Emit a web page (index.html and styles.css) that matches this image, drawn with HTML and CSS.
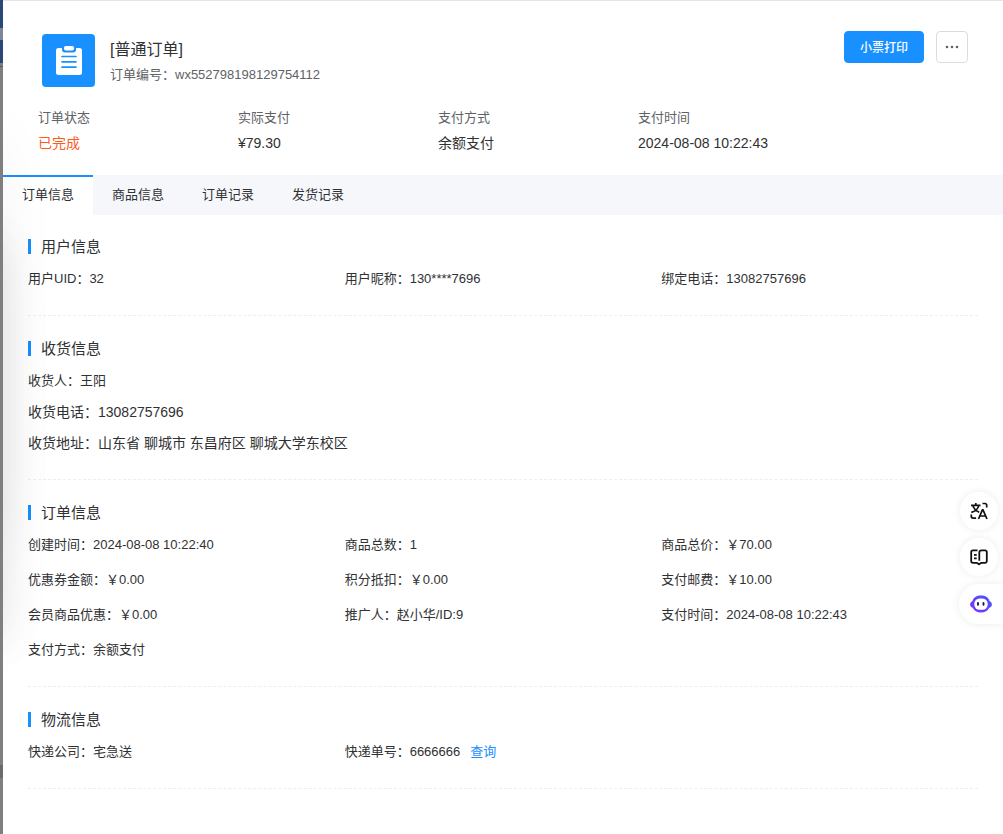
FILE: index.html
```html
<!DOCTYPE html>
<html lang="zh-CN">
<head>
<meta charset="utf-8">
<meta name="viewport" content="width=device-width, initial-scale=1">
<title>订单详情</title>
<link rel="stylesheet" href="styles.css">
</head>
<body>
<main class="drawer">
  <header class="head">
    <div class="head-top">
      <svg class="order-icon" viewBox="0 0 53 53" aria-hidden="true">
        <rect width="53" height="53" rx="4" fill="#1890ff"/>
        <path fill="#fff" d="M16.500 14h3.500v1.500a3 3 0 0 0 3 3h8a3 3 0 0 0 3-3V14h3.500a2.500 2.500 0 0 1 2.500 2.500v22a2.500 2.500 0 0 1-2.500 2.500h-21a2.500 2.500 0 0 1-2.500-2.500v-22a2.500 2.500 0 0 1 2.500-2.500z"/>
        <rect x="22" y="12" width="10" height="4.500" rx="1.800" fill="#fff"/>
        <path stroke="#1890ff" stroke-width="1.700" stroke-linecap="round" d="M20 22.500h14M20 27.800h14M20 33.100h14"/>
      </svg>
      <div class="head-text">
        <h1 class="order-title">[普通订单]</h1>
        <div class="order-no">订单编号：wx552798198129754112</div>
      </div>
      <div class="actions">
        <button class="btn btn-primary" type="button">小票打印</button>
        <button class="btn btn-more" type="button" aria-label="更多">
          <svg viewBox="0 0 14 14" width="14" height="14" aria-hidden="true" fill="#606266"><circle cx="2" cy="7" r="1.300"/><circle cx="7" cy="7" r="1.300"/><circle cx="12" cy="7" r="1.300"/></svg>
        </button>
      </div>
    </div>
    <dl class="summary">
      <div><dt>订单状态</dt><dd class="status">已完成</dd></div>
      <div><dt>实际支付</dt><dd>¥79.30</dd></div>
      <div><dt>支付方式</dt><dd>余额支付</dd></div>
      <div><dt>支付时间</dt><dd>2024-08-08 10:22:43</dd></div>
    </dl>
  </header>
  <nav class="tabs">
    <button class="tab active" type="button">订单信息</button>
    <button class="tab" type="button">商品信息</button>
    <button class="tab" type="button">订单记录</button>
    <button class="tab" type="button">发货记录</button>
  </nav>
  <div class="content">
    <section class="section">
      <h2 class="section-title">用户信息</h2>
      <div class="grid">
        <div>用户UID：32</div><div>用户昵称：130****7696</div><div>绑定电话：13082757696</div>
      </div>
    </section>
    <section class="section">
      <h2 class="section-title">收货信息</h2>
      <div class="lines">
        <div>收货人：王阳</div>
        <div class="large">收货电话：13082757696</div>
        <div class="large">收货地址：山东省 聊城市 东昌府区 聊城大学东校区</div>
      </div>
    </section>
    <section class="section">
      <h2 class="section-title">订单信息</h2>
      <div class="grid">
        <div>创建时间：2024-08-08 10:22:40</div><div>商品总数：1</div><div>商品总价：￥70.00</div>
        <div>优惠券金额：￥0.00</div><div>积分抵扣：￥0.00</div><div>支付邮费：￥10.00</div>
        <div>会员商品优惠：￥0.00</div><div>推广人：赵小华/ID:9</div><div>支付时间：2024-08-08 10:22:43</div>
        <div>支付方式：余额支付</div>
      </div>
    </section>
    <section class="section">
      <h2 class="section-title">物流信息</h2>
      <div class="grid">
        <div>快递公司：宅急送</div><div>快递单号：6666666<a class="query" href="#">查询</a></div>
      </div>
    </section>
  </div>
</main>
<div class="edge-shadow"></div>
<aside class="float-tools">
  <button class="float-btn" type="button" aria-label="翻译">
    <svg viewBox="0 0 18 18" width="18" height="18" fill="none" stroke="#111" stroke-width="1.700" aria-hidden="true">
      <path d="M1 3.300h9.500M5.800 1v2.300M8.800 3.600C8 6.800 5.500 9.200 1.300 10.400M3 4c1 2.800 3.200 5 6.200 6.200M8.500 17l3.900-9.200h.6L17 17M10 14h5.500M12.500 1.500h2.400a1.800 1.800 0 0 1 1.800 1.800V5.500M1.300 12.500v1.800a1.800 1.800 0 0 0 1.800 1.800h3"/>
    </svg>
  </button>
  <button class="float-btn" type="button" aria-label="阅读">
    <svg viewBox="0 0 18 18" width="18" height="18" fill="none" stroke="#111" stroke-width="1.800" aria-hidden="true">
      <path stroke-linejoin="round" d="M7.500 2.300H3A1.800 1.800 0 0 0 1.200 4.100v9A1.800 1.800 0 0 0 3 14.900h4l2 1.400 2-1.400h4a1.800 1.800 0 0 0 1.800-1.800v-9A1.800 1.800 0 0 0 15 2.300h-3.300C10 2.300 9.300 3 9.300 4.600v8.200M4 6.800h2.700M4 10.400h2.700"/>
    </svg>
  </button>
  <button class="float-btn float-bot" type="button" aria-label="助手">
    <svg viewBox="0 0 22 18" width="22" height="18" aria-hidden="true">
      <defs><linearGradient id="bot" x1="0" y1="1" x2="1" y2="0"><stop offset="0" stop-color="#8a2df5"/><stop offset="1" stop-color="#3a5cff"/></linearGradient></defs>
      <path fill="url(#bot)" d="M11 .5c4.500 0 7.600 2 8.700 5.700 1.300.7 2.200 1.800 2.200 3.300s-.9 2.800-2.500 3.300C17.800 16 15 17.500 11 17.500S4.200 16 2.600 12.800C1 12.300.1 11 .1 9.500s.9-2.600 2.200-3.300C3.400 2.500 6.500.5 11 .5z"/>
      <rect x="4.300" y="3.500" width="13.400" height="11.300" rx="5.200" fill="#fff"/>
      <path stroke="#1d1446" stroke-width="1.900" stroke-linecap="round" d="M8 8v1.700M13.500 8v1.700"/>
    </svg>
  </button>
</aside>
</body>
</html>
```
FILE: styles.css
```css
* { box-sizing: border-box; }

body {
  margin: 0;
  min-height: 100vh;
  padding-left: 3px;
  position: relative;
  overflow-x: hidden;
  background: linear-gradient(#2b4777 0 28px, #7f8794 28px 40px, #2b4777 40px 63px, #7f7f7f 63px 66px, #5c5c5c 66px 67px, #7f7f7f 67px 765px, #6b6b6b 765px 778px, #7f7f7f 778px);
  font-family: "Liberation Sans", "Noto Sans CJK SC", sans-serif;
  font-size: 13px;
  color: #303133;
}

button {
  font: inherit;
  cursor: pointer;
}

h1, h2, dl, dd {
  margin: 0;
  font-weight: 400;
}

.drawer {
  min-height: 100vh;
  background: #fff;
  border-top: 1px solid #e4e4e4;
}

.head { padding: 30px 35px 20px; }

.head-top {
  display: flex;
  align-items: flex-start;
}

.order-icon {
  width: 53px;
  height: 53px;
  margin: 3px 15px 0 4px;
}

.head-text {
  flex: 1;
  padding-top: 6px;
}

.order-title {
  font-size: 16px;
  line-height: 26px;
}

.order-no {
  line-height: 24px;
  color: #606266;
}

.actions {
  display: flex;
  gap: 12px;
}

.btn {
  height: 32px;
  border-radius: 4px;
  border: 1px solid #dcdfe6;
  background: #fff;
  font-size: 12px;
}

.btn-primary {
  width: 80px;
  padding: 0 0 2px;
  border-color: #1890ff;
  background: #1890ff;
  color: #fff;
  font-weight: 500;
}

.btn-more {
  display: flex;
  align-items: center;
  justify-content: center;
  width: 32px;
  padding: 0;
  border-color: #dcdcdc;
}

.summary {
  display: grid;
  grid-template-columns: repeat(4, 200px);
  margin-top: 18px;
}

.summary dt {
  line-height: 26px;
  color: #606266;
}

.summary dd {
  font-size: 14px;
  line-height: 24px;
}

.summary .status { color: #ff5a1f; }

.tabs {
  display: flex;
  background: #f5f7fb;
}

.tab {
  width: 90px;
  height: 40px;
  padding: 0 0 6px;
  border: 0;
  border-top: 2px solid transparent;
  background: none;
  color: #303133;
}

.tab.active {
  border-top-color: #1890ff;
  background: #fff;
}

.content { padding: 0 25px; }

.section {
  padding: 25px 0 26px;
  border-bottom: 1px dashed #eee;
}

.section:first-child { padding-top: 24px; }

.section-title {
  padding-left: 10px;
  border-left: 3px solid #1890ff;
  font-size: 15px;
  line-height: 15px;
}

.grid {
  display: grid;
  grid-template-columns: repeat(3, 1fr);
  row-gap: 15px;
  margin-top: 15px;
  line-height: 20px;
}

.lines {
  display: grid;
  row-gap: 11px;
  margin-top: 15px;
  line-height: 20px;
}

.large { font-size: 14px; }

.query {
  margin-left: 10px;
  color: #1890ff;
  text-decoration: none;
}

.edge-shadow {
  position: absolute;
  left: 3px;
  top: 1px;
  width: 60px;
  height: 760px;
  overflow: hidden;
  pointer-events: none;
}

.edge-shadow::before {
  content: "";
  position: absolute;
  left: -200px;
  top: 240px;
  width: 197px;
  height: 400px;
  box-shadow: 0 0 40px rgba(0, 0, 0, .09), 0 -100px 60px rgba(0, 0, 0, .05), 0 0 60px rgba(0, 0, 0, .05);
}

.float-tools {
  position: fixed;
  right: 0;
  top: 492px;
  display: flex;
  flex-direction: column;
  align-items: flex-end;
  gap: 8px;
}

.float-btn {
  display: flex;
  align-items: center;
  justify-content: center;
  width: 38px;
  height: 38px;
  margin-right: 5px;
  padding: 0;
  border: 0;
  border-radius: 50%;
  background: #fff;
  box-shadow: 0 0 8px rgba(0, 0, 0, .08);
}

.float-bot {
  width: 44px;
  height: 40px;
  margin-right: 0;
  border-radius: 20px 0 0 20px;
}
```
